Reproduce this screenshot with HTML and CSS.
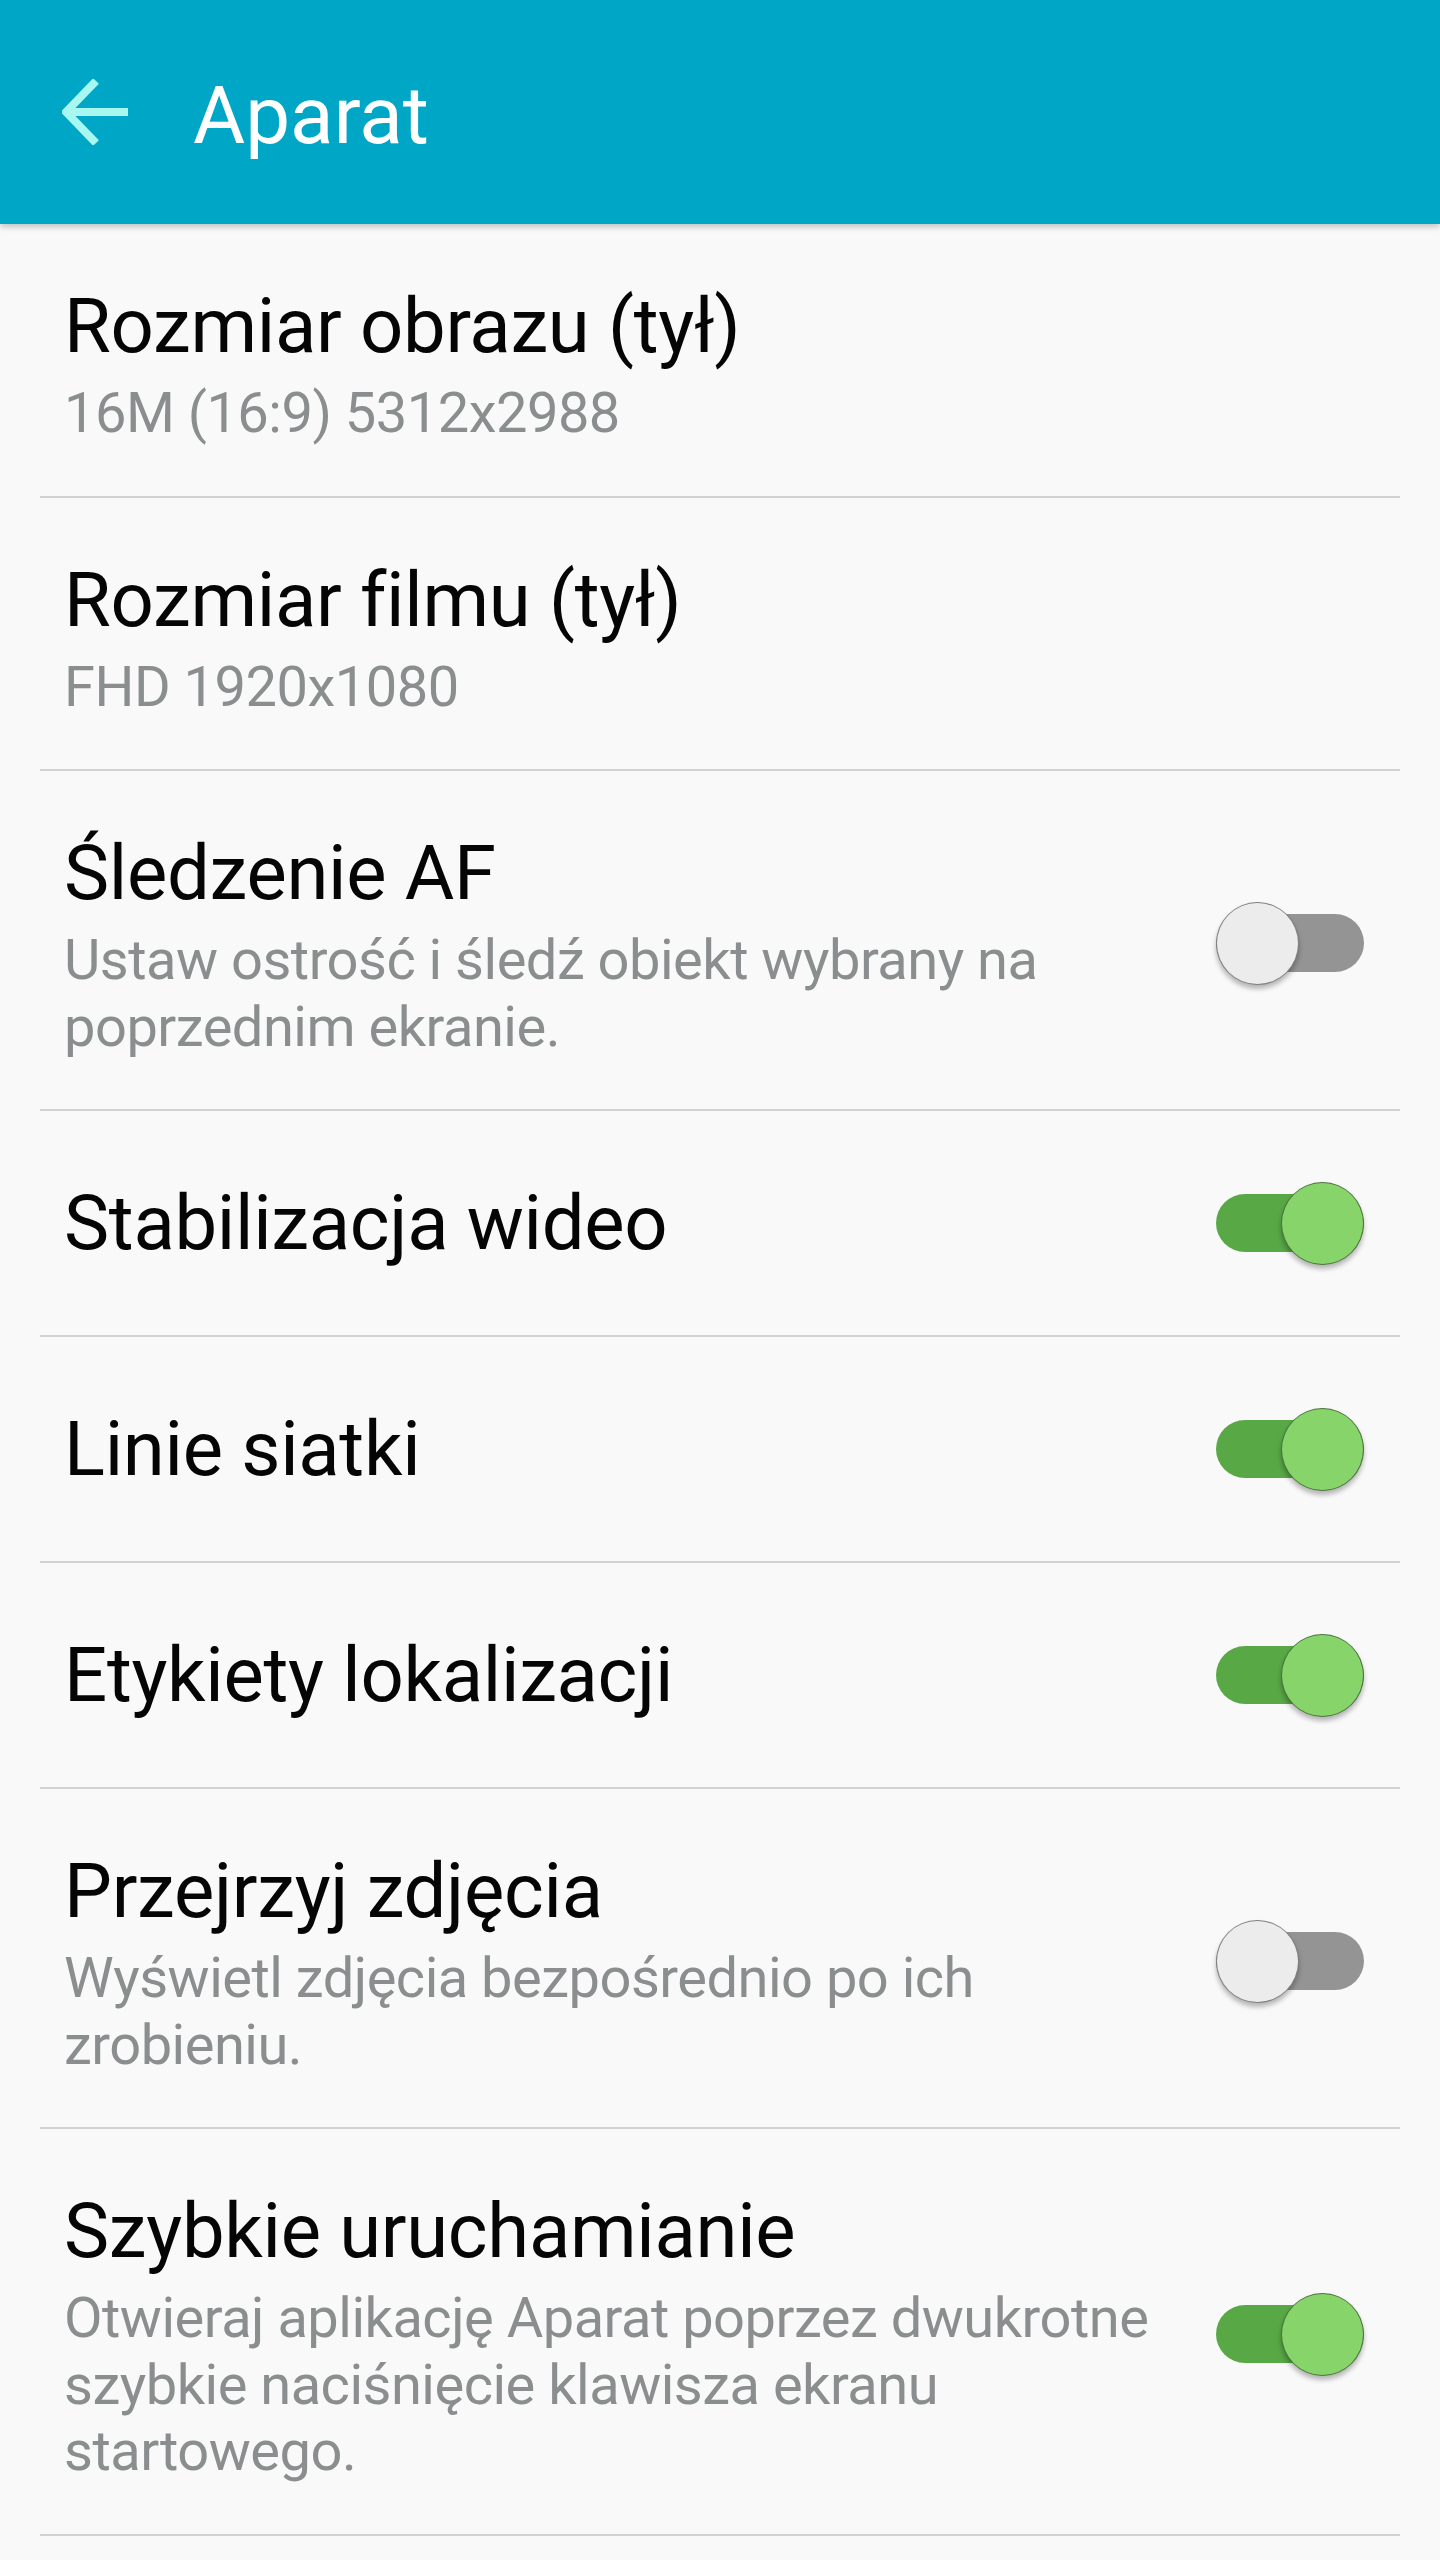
FILE: index.html
```html
<!DOCTYPE html>
<html lang="pl">
<head>
<meta charset="utf-8">
<title>Aparat</title>
<link rel="stylesheet" href="styles.css">
</head>
<body>
<header class="appbar">
  <svg class="back" width="68" height="66" viewBox="0 0 68 66" aria-hidden="true">
    <path d="M34 2 L4 33 L34 64 M4 33 L66 33" fill="none" stroke="#a9f7f1" stroke-width="8" stroke-linejoin="miter"/>
  </svg>
  <h1 class="appbar-title">Aparat</h1>
</header>
<ul class="list">
  <li class="item">
    <div class="text">
      <div class="title">Rozmiar obrazu (tył)</div>
      <div class="sub">16M (16:9) 5312x2988</div>
    </div>
  </li>
  <li class="item">
    <div class="text">
      <div class="title">Rozmiar filmu (tył)</div>
      <div class="sub">FHD 1920x1080</div>
    </div>
  </li>
  <li class="item">
    <div class="text">
      <div class="title">Śledzenie AF</div>
      <div class="sub">Ustaw ostrość i śledź obiekt wybrany na poprzednim ekranie.</div>
    </div>
    <div class="switch off"><span class="thumb"></span></div>
  </li>
  <li class="item single">
    <div class="text">
      <div class="title">Stabilizacja wideo</div>
    </div>
    <div class="switch on"><span class="thumb"></span></div>
  </li>
  <li class="item single">
    <div class="text">
      <div class="title">Linie siatki</div>
    </div>
    <div class="switch on"><span class="thumb"></span></div>
  </li>
  <li class="item single">
    <div class="text">
      <div class="title">Etykiety lokalizacji</div>
    </div>
    <div class="switch on"><span class="thumb"></span></div>
  </li>
  <li class="item">
    <div class="text">
      <div class="title">Przejrzyj zdjęcia</div>
      <div class="sub">Wyświetl zdjęcia bezpośrednio po ich zrobieniu.</div>
    </div>
    <div class="switch off"><span class="thumb"></span></div>
  </li>
  <li class="item">
    <div class="text">
      <div class="title">Szybkie uruchamianie</div>
      <div class="sub">Otwieraj aplikację Aparat poprzez dwukrotne szybkie naciśnięcie klawisza ekranu startowego.</div>
    </div>
    <div class="switch on"><span class="thumb"></span></div>
  </li>
</ul>
</body>
</html>
```
FILE: styles.css
```css
html, body {
  margin: 0;
  padding: 0;
}
body {
  background: #f9f9f9;
  font-family: Roboto, "Noto Sans", "Liberation Sans", sans-serif;
  min-height: 2560px;
}
.appbar {
  height: 224px;
  background: #00a6c5;
  display: flex;
  align-items: center;
  padding-left: 62px;
  box-sizing: border-box;
  box-shadow: 0 3px 6px rgba(0, 0, 0, 0.22);
  position: relative;
  z-index: 1;
}
.back {
  display: block;
  flex-shrink: 0;
}
.appbar-title {
  margin: 7px 0 0 63px;
  font-size: 80px;
  line-height: 1;
  font-weight: 400;
  color: #ffffff;
}
.list {
  list-style: none;
  margin: 0 40px;
  padding: 0;
}
.item {
  display: flex;
  align-items: center;
  padding: 55px 36px 49px 24px;
  border-bottom: 2px solid #d2d2d2;
}
.item.single {
  padding-top: 65px;
  padding-bottom: 65px;
}
.text {
  flex: 1;
  min-width: 0;
  padding-right: 40px;
}
.title {
  font-size: 76px;
  line-height: 94px;
  letter-spacing: -0.3px;
  color: #050505;
}
.sub {
  margin-top: 7px;
  font-size: 56px;
  line-height: 66.5px;
  letter-spacing: -0.5px;
  color: #8b8e8f;
}
.switch {
  flex-shrink: 0;
  width: 148px;
  height: 58px;
  border-radius: 29px;
  display: flex;
  align-items: center;
}
.switch.off {
  background: #949494;
  justify-content: flex-start;
}
.switch.on {
  background: #58a846;
  justify-content: flex-end;
}
.thumb {
  flex-shrink: 0;
  width: 83px;
  height: 83px;
  box-sizing: border-box;
  border-radius: 50%;
  border: 1px solid rgba(0, 0, 0, 0.45);
  box-shadow: 0 4px 5px rgba(0, 0, 0, 0.28);
}
.switch.off .thumb {
  background: #ececec;
}
.switch.on .thumb {
  background: #87d46b;
}
```
